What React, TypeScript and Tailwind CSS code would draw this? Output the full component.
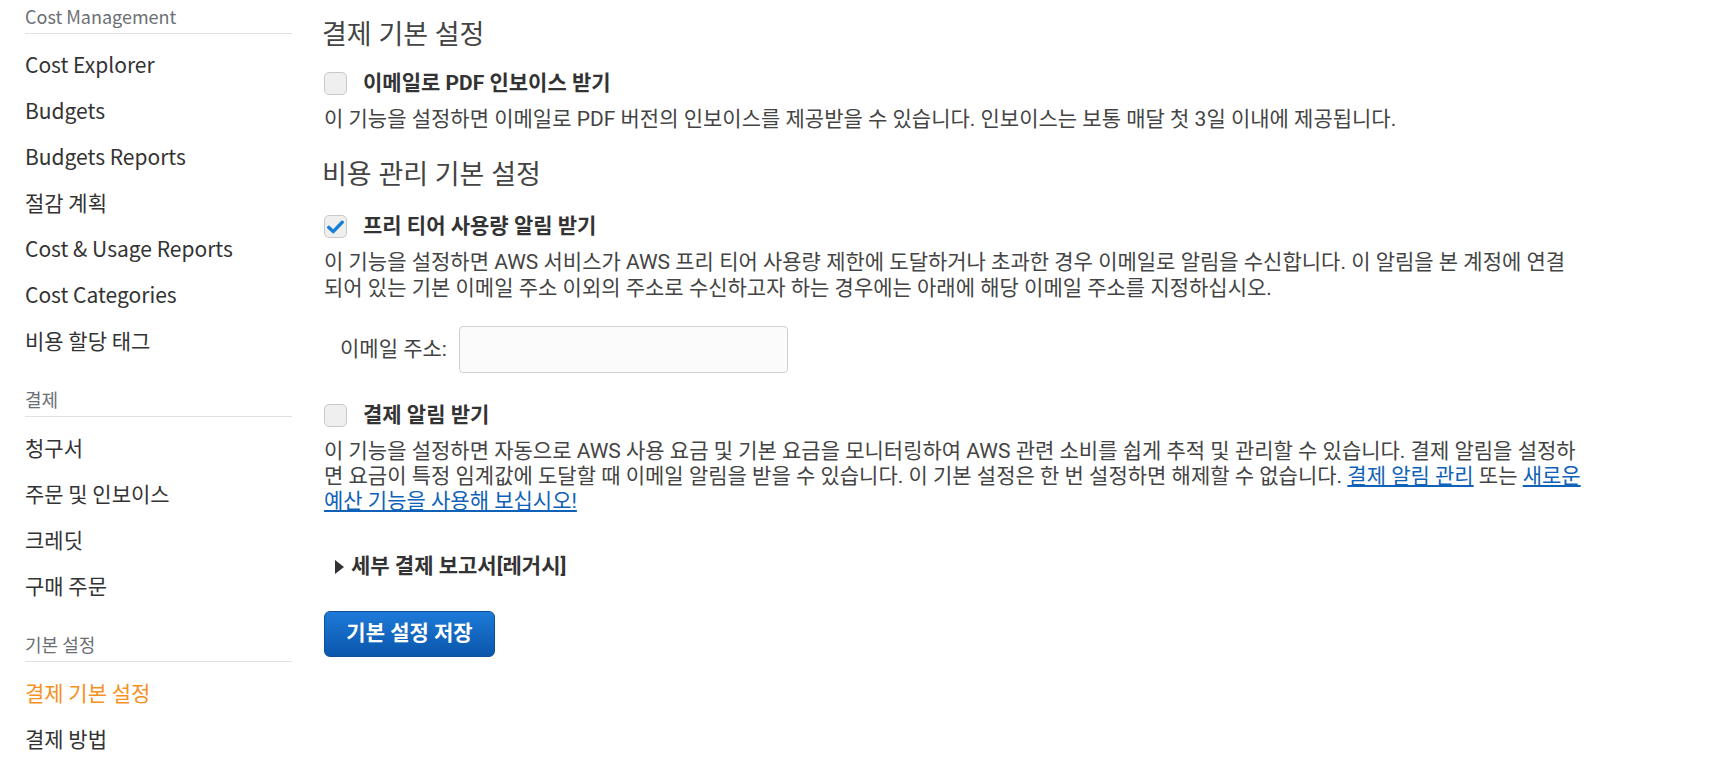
import React from 'react';

const sections = [
  {
    title: 'Cost Management',
    items: ['Cost Explorer', 'Budgets', 'Budgets Reports', '절감 계획', 'Cost & Usage Reports', 'Cost Categories', '비용 할당 태그'],
  },
  {
    title: '결제',
    items: ['청구서', '주문 및 인보이스', '크레딧', '구매 주문'],
  },
  {
    title: '기본 설정',
    items: ['결제 기본 설정', '결제 방법'],
  },
];

const ACTIVE = '결제 기본 설정';

function Checkbox({ checked }: { checked?: boolean }) {
  return (
    <span className="w-[23px] h-[23px] rounded-[5px] border border-[#c9c9c9] bg-[#efefef] flex items-center justify-center shrink-0">
      {checked && (
        <svg width="17" height="14" viewBox="0 0 17 14">
          <path d="M1.8 7.4 L6.2 11.6 L15.2 2.2" fill="none" stroke="#1a80d6" strokeWidth="3.4" strokeLinecap="round" strokeLinejoin="round" />
        </svg>
      )}
    </span>
  );
}

export default function App() {
  return (
    <div className="flex min-h-[765px] bg-white text-[#444]" style={{ fontFamily: 'Roboto, "Noto Sans CJK KR", sans-serif' }}>
      <aside className="w-[292px] shrink-0 pl-[25px]" style={{ fontFamily: '"Noto Sans CJK KR", sans-serif' }}>
        {sections.map((s, i) => (
          <div key={s.title} className={i > 0 ? 'mt-[19px]' : ''}>
            <div className="h-[34px] flex items-center border-b border-[#e1e1e1] text-[18px] text-[#6b6f74]">{s.title}</div>
            <ul className="mt-[8px]">
              {s.items.map(item => (
                <li
                  key={item}
                  className={`h-[46px] flex items-center text-[21px] ${item === ACTIVE ? 'text-[#f7901e]' : 'text-[#333]'}`}
                >
                  {item}
                </li>
              ))}
            </ul>
          </div>
        ))}
      </aside>

      <main className="pl-[32px] pt-[18px] w-[1294px]">
        <h1 className="text-[27px] leading-[34px] font-normal text-[#444] -ml-[2px]">결제 기본 설정</h1>

        <label className="mt-[20px] flex items-center gap-[16px] h-[23px]">
          <Checkbox />
          <span className="text-[21px] font-bold text-[#333]">이메일로 PDF 인보이스 받기</span>
        </label>
        <p className="mt-[11px] text-[21px] leading-[26px]">
          이 기능을 설정하면 이메일로 PDF 버전의 인보이스를 제공받을 수 있습니다. 인보이스는 보통 매달 첫 3일 이내에 제공됩니다.
        </p>

        <h2 className="mt-[26px] text-[27px] leading-[34px] font-normal text-[#444] -ml-[2px]">비용 관리 기본 설정</h2>

        <label className="mt-[23px] flex items-center gap-[16px] h-[23px]">
          <Checkbox checked />
          <span className="text-[21px] font-bold text-[#333]">프리 티어 사용량 알림 받기</span>
        </label>
        <p className="mt-[11px] text-[21px] leading-[26px] w-[1250px]">
          이 기능을 설정하면 AWS 서비스가 AWS 프리 티어 사용량 제한에 도달하거나 초과한 경우 이메일로 알림을 수신합니다. 이 알림을 본 계정에 연결되어 있는 기본 이메일 주소 이외의 주소로 수신하고자 하는 경우에는 아래에 해당 이메일 주소를 지정하십시오.
        </p>

        <div className="mt-[25px] flex items-center pl-[16px]">
          <span className="text-[21px] text-[#444] w-[119px]">이메일 주소:</span>
          <input className="w-[329px] h-[47px] rounded-[4px] border border-[#cfcfcf] bg-[#fbfbfb] outline-none" />
        </div>

        <label className="mt-[31px] flex items-center gap-[16px] h-[23px]">
          <Checkbox />
          <span className="text-[21px] font-bold text-[#333]">결제 알림 받기</span>
        </label>
        <p className="mt-[12px] text-[21px] leading-[25px] w-[1262px]">
          이 기능을 설정하면 자동으로 AWS 사용 요금 및 기본 요금을 모니터링하여 AWS 관련 소비를 쉽게 추적 및 관리할 수 있습니다. 결제 알림을 설정하면 요금이 특정 임계값에 도달할 때 이메일 알림을 받을 수 있습니다. 이 기본 설정은 한 번 설정하면 해제할 수 없습니다.{' '}
          <a href="#" className="text-[#0f62b8] underline">결제 알림 관리</a> 또는{' '}
          <a href="#" className="text-[#0f62b8] underline">새로운 예산 기능을 사용해 보십시오!</a>
        </p>

        <div className="mt-[40px] flex items-center pl-[11px] h-[26px] text-[21px] font-bold text-[#333]">
          <svg width="9" height="14" viewBox="0 0 9 14" className="mr-[7px]">
            <path d="M0 0 L9 7 L0 14 Z" fill="#333" />
          </svg>
          세부 결제 보고서[레거시]
        </div>

        <button className="mt-[31px] w-[171px] h-[46px] rounded-[6px] border border-[#0b4f9b] bg-gradient-to-b from-[#1d7ad8] to-[#0a56ab] text-white text-[21px] font-bold">
          기본 설정 저장
        </button>
      </main>
    </div>
  );
}
